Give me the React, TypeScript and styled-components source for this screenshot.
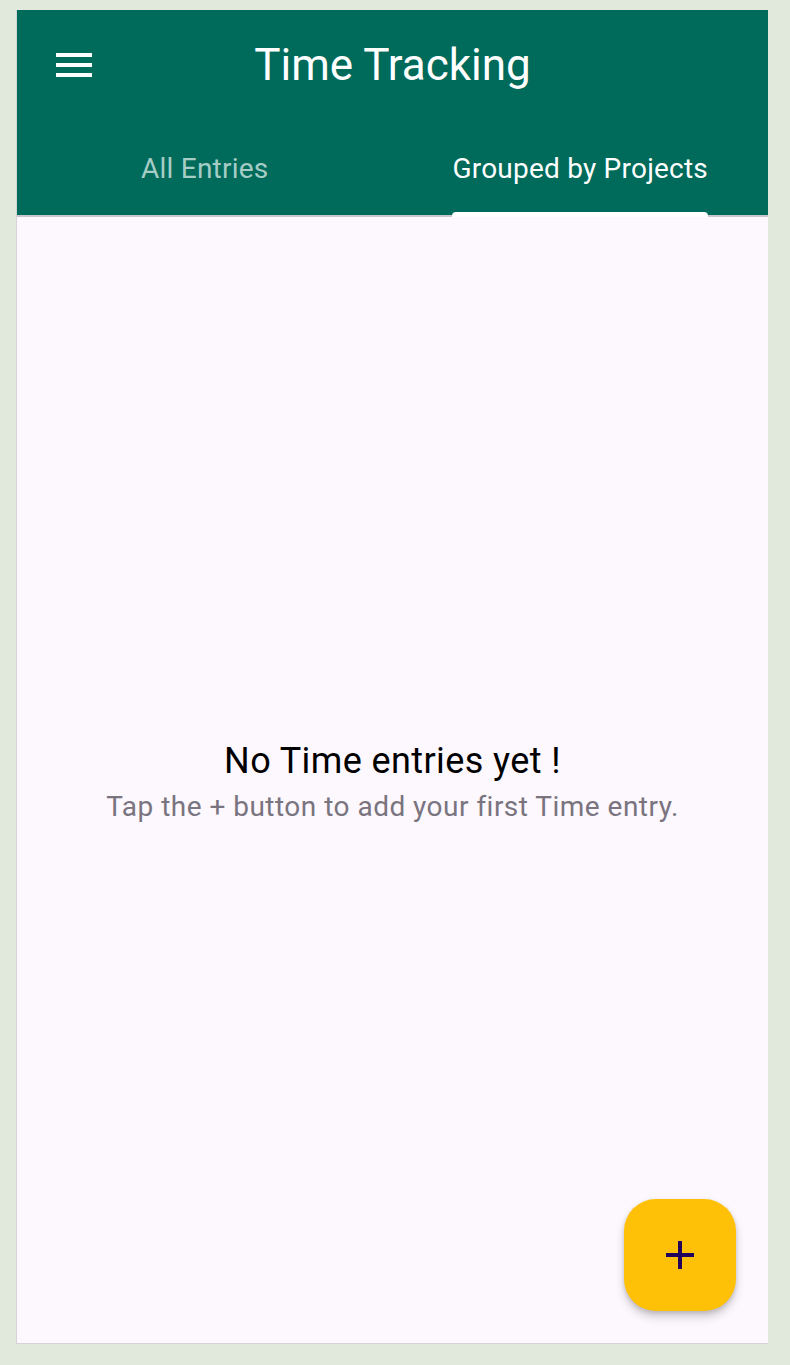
import React from "react";
import styled, { createGlobalStyle } from "styled-components";

const Global = createGlobalStyle`
  html, body { margin: 0; padding: 0; background: #e1e8dc; }
  body { font-family: Roboto, "Noto Sans", sans-serif; }
  * { box-sizing: border-box; }
`;

const Page = styled.div`
  width: 790px;
  height: 1365px;
  padding: 10px 22px 21px 16px;
  display: flex;
`;

const Frame = styled.div`
  flex: 1;
  display: flex;
  flex-direction: column;
  border: 1px solid #d4d4d4;
  border-top: none;
  border-right: none;
  background: #fdf7fe;
  position: relative;
`;

const Header = styled.header`
  background: #006a5b;
  display: flex;
  flex-direction: column;
`;

const Toolbar = styled.div`
  height: 112px;
  display: grid;
  grid-template-columns: 112px 1fr 112px;
  align-items: center;
`;

const MenuButton = styled.button`
  width: 48px;
  height: 48px;
  margin-left: 33px;
  margin-top: -2px;
  padding: 0;
  border: none;
  background: transparent;
  display: flex;
  color: #ffffff;
`;

const Title = styled.h1`
  margin: 0;
  margin-top: -3px;
  text-align: center;
  color: #ffffff;
  font-family: Roboto, sans-serif;
  font-weight: 400;
  font-size: 44px;
  line-height: 56px;
`;

const Tabs = styled.div`
  height: 93px;
  display: grid;
  grid-template-columns: 1fr 1fr;
`;

const Tab = styled.div`
  display: flex;
  justify-content: center;
  align-items: stretch;
`;

const TabInner = styled.div<{ $active?: boolean }>`
  position: relative;
  display: flex;
  align-items: center;
  font-family: Roboto, sans-serif;
  font-size: 28px;
  font-weight: 400;
  letter-spacing: 0.22px;
  color: ${(p) => (p.$active ? "#ffffff" : "#a5cdc5")};
`;

const Indicator = styled.div`
  position: absolute;
  left: 0;
  right: 0;
  bottom: -2px;
  height: 5px;
  background: #ffffff;
  border-radius: 4px 4px 0 0;
`;

const Divider = styled.div`
  height: 2px;
  background: #c9c6cc;
`;

const Body = styled.main`
  flex: 1;
  display: flex;
  flex-direction: column;
  align-items: center;
  justify-content: center;
  padding-top: 10px;
`;

const EmptyTitle = styled.div`
  font-family: Roboto, sans-serif;
  font-size: 36px;
  font-weight: 400;
  letter-spacing: 0.4px;
  color: #000000;
  line-height: 44px;
`;

const EmptyText = styled.div`
  font-family: Roboto, sans-serif;
  font-size: 28px;
  font-weight: 400;
  letter-spacing: 0.48px;
  color: #79747e;
  line-height: 48px;
`;

const Fab = styled.button`
  position: absolute;
  right: 32px;
  bottom: 32px;
  width: 112px;
  height: 112px;
  border: none;
  border-radius: 32px;
  background: #ffc107;
  display: flex;
  align-items: center;
  justify-content: center;
  padding: 0;
  color: #21005d;
  box-shadow: 0 6px 10px rgba(0, 0, 0, 0.18), 0 2px 4px rgba(0, 0, 0, 0.12);
`;

export default function App() {
  return (
    <>
      <Global />
      <Page>
        <Frame>
          <Header>
            <Toolbar>
              <MenuButton aria-label="menu">
                <svg width="48" height="48" viewBox="0 0 24 24" fill="currentColor">
                  <path d="M3 18h18v-2H3v2zm0-5h18v-2H3v2zm0-7v2h18V6H3z" />
                </svg>
              </MenuButton>
              <Title>Time Tracking</Title>
              <div />
            </Toolbar>
            <Tabs>
              <Tab>
                <TabInner>All Entries</TabInner>
              </Tab>
              <Tab>
                <TabInner $active>
                  Grouped by Projects
                  <Indicator />
                </TabInner>
              </Tab>
            </Tabs>
            <Divider />
          </Header>
          <Body>
            <EmptyTitle>No Time entries yet !</EmptyTitle>
            <EmptyText>Tap the + button to add your first Time entry.</EmptyText>
          </Body>
          <Fab aria-label="add">
            <svg width="48" height="48" viewBox="0 0 24 24" fill="currentColor">
              <path d="M19 13h-6v6h-2v-6H5v-2h6V5h2v6h6v2z" />
            </svg>
          </Fab>
        </Frame>
      </Page>
    </>
  );
}
